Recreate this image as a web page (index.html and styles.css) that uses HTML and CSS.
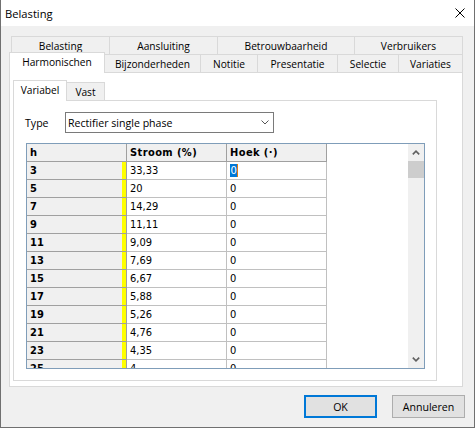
FILE: index.html
```html
<!DOCTYPE html>
<html lang="nl">
<head>
<meta charset="utf-8">
<title>Belasting</title>
<link rel="stylesheet" href="styles.css">
</head>
<body>
<div class="window">
  <div class="titlebar">
    <span class="title">Belasting</span>
    <svg class="close" viewBox="0 0 10 10"><path d="M0.5 0.5 L9.5 9.5 M9.5 0.5 L0.5 9.5" stroke="#000" stroke-width="1" fill="none"/></svg>
  </div>
  <div class="main">
    <div class="tabctl">
      <div class="tabrow row1">
        <div class="tab t-bel">Belasting</div>
        <div class="tab t-aan">Aansluiting</div>
        <div class="tab t-bet">Betrouwbaarheid</div>
        <div class="tab t-ver">Verbruikers</div>
      </div>
      <div class="tabrow row2">
        <div class="tab sel t-har">Harmonischen</div>
        <div class="tab t-bij">Bijzonderheden</div>
        <div class="tab t-not">Notitie</div>
        <div class="tab t-pre">Presentatie</div>
        <div class="tab t-sel">Selectie</div>
        <div class="tab t-var">Variaties</div>
      </div>
      <div class="panel">
        <div class="tabrow irow">
          <div class="tab sel t-vab">Variabel</div>
          <div class="tab t-vas">Vast</div>
        </div>
        <div class="ipanel">
          <div class="typerow">
            <span class="lbl">Type</span>
            <div class="combo">
              <span>Rectifier single phase</span>
              <svg class="chev" viewBox="0 0 8 5"><path d="M0.5 0.5 L4 4 L7.5 0.5" stroke="#555" stroke-width="1" fill="none"/></svg>
            </div>
          </div>
          <div class="grid">
            <div class="gbody">
              <div class="grow head">
                <div class="c">h</div>
                <div class="c">Stroom (%)</div>
                <div class="c">Hoek (·)</div>
              </div>
              <div class="grow"><div class="c h"><span class="num">3</span><span class="bar"></span></div><div class="c">33,33</div><div class="c"><span class="selv">0</span></div></div>
              <div class="grow"><div class="c h"><span class="num">5</span><span class="bar"></span></div><div class="c">20</div><div class="c">0</div></div>
              <div class="grow"><div class="c h"><span class="num">7</span><span class="bar"></span></div><div class="c">14,29</div><div class="c">0</div></div>
              <div class="grow"><div class="c h"><span class="num">9</span><span class="bar"></span></div><div class="c">11,11</div><div class="c">0</div></div>
              <div class="grow"><div class="c h"><span class="num">11</span><span class="bar"></span></div><div class="c">9,09</div><div class="c">0</div></div>
              <div class="grow"><div class="c h"><span class="num">13</span><span class="bar"></span></div><div class="c">7,69</div><div class="c">0</div></div>
              <div class="grow"><div class="c h"><span class="num">15</span><span class="bar"></span></div><div class="c">6,67</div><div class="c">0</div></div>
              <div class="grow"><div class="c h"><span class="num">17</span><span class="bar"></span></div><div class="c">5,88</div><div class="c">0</div></div>
              <div class="grow"><div class="c h"><span class="num">19</span><span class="bar"></span></div><div class="c">5,26</div><div class="c">0</div></div>
              <div class="grow"><div class="c h"><span class="num">21</span><span class="bar"></span></div><div class="c">4,76</div><div class="c">0</div></div>
              <div class="grow"><div class="c h"><span class="num">23</span><span class="bar"></span></div><div class="c">4,35</div><div class="c">0</div></div>
              <div class="grow"><div class="c h"><span class="num">25</span><span class="bar"></span></div><div class="c">4</div><div class="c">0</div></div>
            </div>
            <div class="vscroll">
              <div class="sbtn"><svg class="arr" viewBox="0 0 8 5"><path d="M0.8 4.4 L4 1.2 L7.2 4.4" stroke="#606060" stroke-width="1.6" fill="none"/></svg></div>
              <div class="thumb"></div>
              <div class="track"></div>
              <div class="sbtn"><svg class="arr" viewBox="0 0 8 5"><path d="M0.8 0.6 L4 3.8 L7.2 0.6" stroke="#606060" stroke-width="1.6" fill="none"/></svg></div>
            </div>
          </div>
        </div>
      </div>
    </div>
    <div class="buttons">
      <button class="btn def">OK</button>
      <button class="btn">Annuleren</button>
    </div>
  </div>
</div>
</body>
</html>
```
FILE: styles.css
```css
* { box-sizing: border-box; }
html, body { margin: 0; padding: 0; }
body {
  font-family: "Open Sans", "Noto Sans", sans-serif;
  font-size: 10.2px;
  color: #000;
  background: #fff;
}
.window {
  width: 475px;
  height: 428px;
  border: 1px solid #707070;
  border-top: none;
  display: flex;
  flex-direction: column;
  background: #f0f0f0;
  overflow: hidden;
}
.titlebar {
  height: 26px;
  flex: none;
  background: #fff;
  display: flex;
  align-items: center;
  justify-content: space-between;
  padding: 0 9px 0 4px;
}
.title { font-size: 11.2px; }
.close { width: 10px; height: 10px; display: block; }
.main {
  flex: 1;
  display: flex;
  flex-direction: column;
  padding: 10px 0 9px 8px;
}
.tabctl { width: 454px; }
.tabrow { display: flex; height: 18px; flex: none; }
.row1 { padding-left: 2px; }
.tab {
  flex: none;
  height: 18px;
  border: 1px solid #d9d9d9;
  border-bottom: none;
  background: #f0f0f0;
  display: flex;
  align-items: center;
  justify-content: center;
  margin-left: -1px;
  white-space: nowrap;
}
.tab:first-child { margin-left: 0; }
.tab.sel {
  background: #fff;
  height: 21px;
  margin-top: -2px;
  padding-bottom: 2px;
  position: relative;
  z-index: 1;
}
.t-bel { width: 99px; }
.t-aan { width: 109px; }
.t-bet { width: 138px; }
.t-ver { width: 109px; }
.t-har { width: 96px; }
.t-bij { width: 97px; }
.t-not { width: 58px; }
.t-pre { width: 81px; }
.t-sel { width: 62px; }
.t-var { width: 65px; }
.t-vab { width: 54px; }
.t-vas { width: 39px; }

.panel {
  height: 315px;
  border: 1px solid #d9d9d9;
  background: #fff;
  padding: 9px 25px 5px 3px;
  display: flex;
  flex-direction: column;
}
.ipanel {
  height: 281px;
  border: 1px solid #d9d9d9;
  background: #fff;
  padding: 11px 0 0 12px;
}
.typerow { display: flex; align-items: center; height: 21px; }
.lbl { width: 40px; margin-left: -1px; font-size: 10.6px; }
.combo {
  width: 209px;
  height: 21px;
  border: 1px solid #7a7a7a;
  display: flex;
  align-items: center;
  justify-content: space-between;
  padding: 0 4px 0 2px;
  font-size: 10.6px;
}
.chev { width: 8px; height: 5px; display: block; }

.grid {
  margin-top: 10px;
  width: 399px;
  height: 226px;
  border: 1px solid #7f9db9;
  display: flex;
}
.gbody {
  flex: 1;
  overflow: hidden;
  background: #fff;
  font-family: "DejaVu Sans Condensed", "DejaVu Sans", sans-serif;
  font-stretch: condensed;
  font-size: 11px;
}
.grow { display: flex; height: 18px; }
.c {
  width: 100px;
  height: 18px;
  border-right: 1px solid #c0c0c0;
  border-bottom: 1px solid #c0c0c0;
  padding-left: 3px;
  line-height: 17px;
  white-space: nowrap;
}
.c.h {
  background: #f0f0f0;
  font-weight: bold;
  border-color: #a0a0a0;
  display: flex;
}
.num { flex: 1; }
.bar { width: 4px; background: #ffff00; }
.head .c {
  background: #f0f0f0;
  font-weight: bold;
  border-color: #a0a0a0;
  letter-spacing: 0.4px;
}
.selv {
  background: #0078d7;
  color: #fff;
  border-right: 1px solid #e07a10;
  padding: 0 0.5px;
}
.vscroll {
  width: 16px;
  background: #f0f0f0;
  display: flex;
  flex-direction: column;
}
.sbtn {
  height: 17px;
  flex: none;
  display: flex;
  align-items: center;
  justify-content: center;
}
.arr { width: 8px; height: 5px; display: block; }
.thumb { height: 17px; flex: none; background: #cdcdcd; }
.track { flex: 1; }

.buttons {
  display: flex;
  justify-content: flex-end;
  gap: 15px;
  margin-top: 8px;
  padding-right: 9px;
}
.btn {
  width: 73px;
  height: 23px;
  font-family: inherit;
  font-size: 10.6px;
  color: #000;
  background: #e1e1e1;
  border: 1px solid #adadad;
  padding: 0;
}
.btn.def { border: 2px solid #0078d7; }
```
